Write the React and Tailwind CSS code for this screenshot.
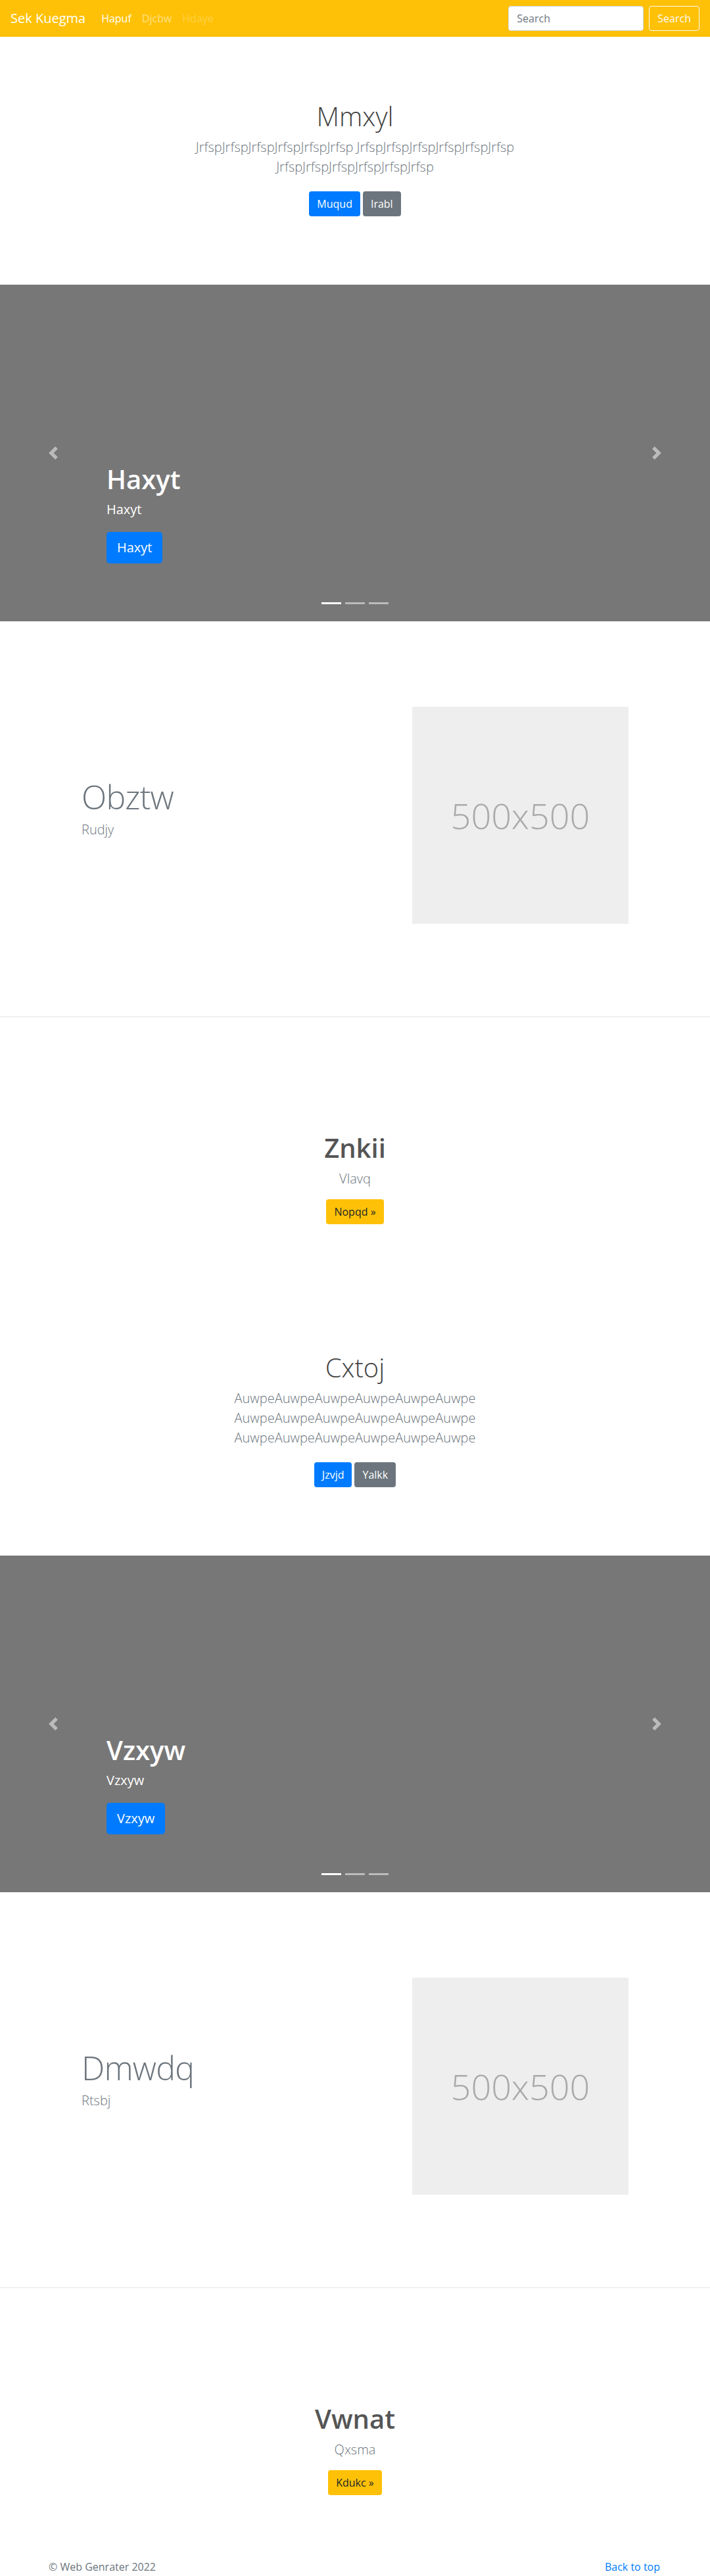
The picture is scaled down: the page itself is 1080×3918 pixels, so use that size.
import React from 'react'

const PrevIcon = ({ className }) => (
  <svg viewBox="0 0 8 8" fill="#fff" className={className}>
    <path d="M5.25 0l-4 4 4 4 1.5-1.5L4.25 4l2.5-2.5L5.25 0z" />
  </svg>
)

const NextIcon = ({ className }) => (
  <svg viewBox="0 0 8 8" fill="#fff" className={className}>
    <path d="M2.75 0l-1.5 1.5L3.75 4l-2.5 2.5L2.75 8l4-4-4-4z" />
  </svg>
)

function Navbar() {
  return (
    <nav className="h-14 bg-[#ffc107] flex items-center px-4">
      <span className="text-[20px] leading-[30px] text-white mr-4">Sek Kuegma</span>
      <a className="px-2 text-white">Hapuf</a>
      <a className="px-2 text-white/50">Djcbw</a>
      <a className="px-2 text-white/25">Hdaye</a>
      <div className="ml-auto flex items-center gap-2">
        <input
          placeholder="Search"
          className="w-[206px] h-[38px] rounded border border-[#ced4da] bg-white px-3 text-[16px] text-[#495057] placeholder:text-[#6c757d] outline-none"
        />
        <button className="h-[38px] px-3 rounded border border-[#f8f9fa] text-[#f8f9fa] text-[16px]">Search</button>
      </div>
    </nav>
  )
}

// jumbotron-style block: heading, muted lead, two buttons
function Hero({ title, children, primary, secondary }) {
  return (
    <section className="pt-[97px] pb-[104px] text-center">
      <h1 className="text-[40px] leading-[48px] font-light text-[#444] mb-2">{title}</h1>
      <p className="text-[20px] leading-[30px] font-light text-[#6c757d] mb-[22px] max-w-[500px] mx-auto">
        {children}
      </p>
      <div className="flex justify-center gap-1">
        <a className="h-[38px] px-3 leading-[38px] rounded bg-[#007bff] text-white text-[16px]">{primary}</a>
        <a className="h-[38px] px-3 leading-[38px] rounded bg-[#6c757d] text-white text-[16px]">{secondary}</a>
      </div>
    </section>
  )
}

function Carousel({ title }) {
  return (
    <div className="relative h-[512px] bg-[#777]">
      <PrevIcon className="absolute left-[71px] top-[246px] w-5 h-5 opacity-50" />
      <NextIcon className="absolute left-[989px] top-[246px] w-5 h-5 opacity-50" />
      <div className="absolute left-[162px] bottom-[88px] flex flex-col items-start text-white">
        <h1 className="text-[40px] leading-[48px] font-semibold mb-2">{title}</h1>
        <p className="text-[20px] leading-[28px] mb-5">{title}</p>
        <a className="h-12 px-4 leading-[48px] rounded-[5px] bg-[#007bff] text-white text-[20px]">{title}</a>
      </div>
      <div className="absolute left-0 right-0 bottom-[26px] flex justify-center gap-[6px]">
        <span className="w-[30px] h-[3px] bg-white" />
        <span className="w-[30px] h-[3px] bg-white/50" />
        <span className="w-[30px] h-[3px] bg-white/50" />
      </div>
    </div>
  )
}

function Featurette({ title, sub }) {
  return (
    <section className="flex items-center justify-between px-[124px] pt-[130px] pb-[141px]">
      <div>
        <h2 className="text-[50px] leading-[50px] font-light tracking-[-0.8px] text-[#6c757d] mb-[10px]">{title}</h2>
        <p className="text-[20px] leading-[30px] font-light text-[#6c757d] mb-4">{sub}</p>
      </div>
      <div className="w-[329px] h-[330px] bg-[#eee] flex items-center justify-center text-[#aaa] text-[54px] font-light">
        500x500
      </div>
    </section>
  )
}

function Promo({ title, sub, action }) {
  return (
    <section className="border-t border-[#e5e5e5] pt-[175px] pb-[97px] text-center">
      <h2 className="text-[40px] leading-[48px] font-semibold text-[#555] mb-2">{title}</h2>
      <p className="text-[20px] leading-[30px] font-light text-[#6c757d] mb-4">{sub}</p>
      <div className="flex justify-center">
        <a className="h-[38px] px-3 leading-[38px] rounded bg-[#ffc107] text-[#212529] text-[16px]">{action} »</a>
      </div>
    </section>
  )
}

export default function App() {
  const jrfsp = 'JrfspJrfspJrfspJrfspJrfspJrfsp'
  const auwpe = 'AuwpeAuwpeAuwpeAuwpeAuwpeAuwpe'
  return (
    <div className="bg-white font-['Open_Sans','Segoe_UI',sans-serif] text-[16px] leading-6 text-[#212529]">
      <Navbar />
      <Hero title="Mmxyl" primary="Muqud" secondary="Irabl">
        {jrfsp} {jrfsp} {jrfsp}
      </Hero>
      <Carousel title="Haxyt" />
      <Featurette title="Obztw" sub="Rudjy" />
      <Promo title="Znkii" sub="Vlavq" action="Nopqd" />
      <section className="pt-[97px] pb-[104px] text-center">
        <h1 className="text-[40px] leading-[48px] font-light text-[#444] mb-2">Cxtoj</h1>
        <p className="text-[20px] leading-[30px] font-light text-[#6c757d] mb-[22px] max-w-[470px] mx-auto">
          {auwpe} {auwpe} {auwpe}
        </p>
        <div className="flex justify-center gap-1">
          <a className="h-[38px] px-3 leading-[38px] rounded bg-[#007bff] text-white text-[16px]">Jzvjd</a>
          <a className="h-[38px] px-3 leading-[38px] rounded bg-[#6c757d] text-white text-[16px]">Yalkk</a>
        </div>
      </section>
      <Carousel title="Vzxyw" />
      <Featurette title="Dmwdq" sub="Rtsbj" />
      <Promo title="Vwnat" sub="Qxsma" action="Kdukc" />
      <footer className="flex justify-between pl-[74px] pr-[76px] pb-12 text-[#6c757d]">
        <p>© Web Genrater 2022</p>
        <a className="text-[#007bff]">Back to top</a>
      </footer>
    </div>
  )
}
